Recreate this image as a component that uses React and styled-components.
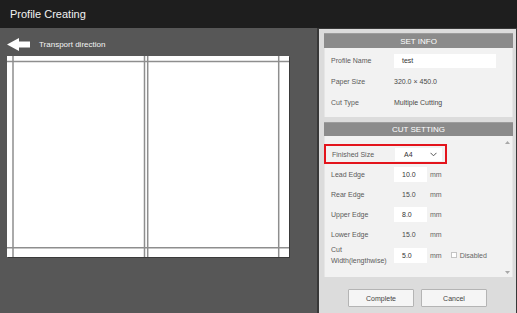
import React from 'react';
import styled, { createGlobalStyle } from 'styled-components';

const GlobalStyle = createGlobalStyle`
  html, body {
    margin: 0;
    padding: 0;
    background: #575757;
  }
  body {
    font-family: "Liberation Sans", Arial, sans-serif;
  }
`;

const Screen = styled.div`
  display: flex;
  flex-direction: column;
  width: 517px;
  height: 313px;
  overflow: hidden;
  background: #575757;
`;

const TitleBar = styled.header`
  display: flex;
  align-items: center;
  flex: none;
  height: 28px;
  padding-left: 10px;
  box-sizing: border-box;
  background: #1e1e1e;
  color: #f2f2f2;
  font-size: 11px;
`;

const Main = styled.div`
  display: flex;
  flex: 1;
  min-height: 0;
`;

const Preview = styled.section`
  display: flex;
  flex-direction: column;
  flex: none;
  width: 317px;
  padding: 10px 0 0 7px;
  box-sizing: border-box;
`;

const Direction = styled.div`
  display: flex;
  align-items: center;
  gap: 9px;
  height: 12px;
  margin-bottom: 6px;
  color: #f4f4f4;
  font-size: 8px;
`;

const Sheet = styled.div`
  width: 282px;
  height: 201px;
  background: #fff;
  box-shadow: 1px 1px 0 #3a3a3a;

  svg {
    display: block;
  }
`;

const Panel = styled.aside`
  display: flex;
  flex-direction: column;
  flex: none;
  width: 200px;
  padding: 4px 3px 0 5px;
  box-sizing: border-box;
  background: #dcdcdc;
  border-top: 1px solid #383838;
  border-left: 2px solid #383838;
  border-right: 1px solid #383838;
`;

const SectionHeader = styled.div`
  display: flex;
  align-items: center;
  justify-content: center;
  height: ${({ $h }) => $h}px;
  box-sizing: border-box;
  margin-top: ${({ $top }) => $top || 0}px;
  background: #8b8b8b;
  border-top: 1px solid #9d9d9d;
  color: #fff;
  font-size: 8px;
`;

const SectionBody = styled.div`
  display: flex;
  height: ${({ $h }) => $h}px;
  box-sizing: border-box;
  background: #f2f2f2;
  border-left: 1px solid #e6e6e6;
  border-right: 1px solid #e6e6e6;
`;

const InfoGrid = styled.div`
  display: grid;
  grid-template-columns: 63px 1fr;
  grid-auto-rows: 21px;
  align-items: center;
  flex: 1;
  padding: 2px 7px 0 6px;
`;

const Label = styled.span`
  flex: none;
  width: ${({ $w }) => $w || 'auto'};
  color: #5a5a5a;
  font-size: 7px;
  line-height: 11px;
`;

const Value = styled.span`
  color: #484848;
  font-size: 7px;
  padding-left: ${({ $pad }) => $pad || 0}px;
  width: ${({ $w }) => ($w ? `${$w}px` : 'auto')};
  box-sizing: border-box;
`;

const TextBox = styled.div`
  display: flex;
  align-items: center;
  width: ${({ $w }) => $w}px;
  height: ${({ $h }) => $h || 15}px;
  padding-left: 8px;
  box-sizing: border-box;
  background: #fff;
  color: #333;
  font-size: 7px;
`;

const Fields = styled.div`
  display: flex;
  flex-direction: column;
  flex: 1;
  padding-top: 8px;
`;

const Row = styled.div`
  display: flex;
  align-items: center;
  height: ${({ $h }) => $h || 20}px;
  box-sizing: border-box;
  margin-left: ${({ $highlight }) => ($highlight ? -1 : 0)}px;
  padding-left: 6px;
  width: ${({ $highlight }) => ($highlight ? '123px' : 'auto')};
  border: ${({ $highlight }) => ($highlight ? '2px solid #e3141c' : 'none')};
`;

const Unit = styled.span`
  margin-left: 3px;
  color: #666;
  font-size: 7px;
`;

const Select = styled(TextBox)`
  justify-content: space-between;
  padding: 0 5px 0 9px;
`;

const Check = styled.label`
  display: flex;
  align-items: center;
  gap: 3px;
  margin-left: 9px;
  color: #666;
  font-size: 7px;

  span {
    width: 6px;
    height: 6px;
    box-sizing: border-box;
    background: #fff;
    border: 1px solid #c4c4c4;
  }
`;

const Scrollbar = styled.div`
  display: flex;
  flex-direction: column;
  justify-content: space-between;
  align-items: center;
  flex: none;
  width: 10px;
  padding: 5px 0 3px;
  box-sizing: border-box;
`;

const Footer = styled.div`
  display: flex;
  justify-content: center;
  gap: 7px;
  padding: 12px 2px 0 0;
`;

const Button = styled.button`
  width: 66px;
  height: 18px;
  padding: 0;
  background: #f5f5f5;
  border: 1px solid #b4b4b4;
  border-radius: 1px;
  color: #444;
  font-family: inherit;
  font-size: 7px;
`;

const Arrow = () => (
  <svg width='23' height='13' viewBox='0 0 23 13'>
    <polygon points='0,6.5 12,0 12,3.5 23,3.5 23,9.5 12,9.5 12,13' fill='#fff' />
  </svg>
);

const Triangle = ({ up }) => (
  <svg width='5' height='3' viewBox='0 0 5 3'>
    <polygon points={up ? '0,3 2.5,0 5,3' : '0,0 2.5,3 5,0'} fill='#a8a8a8' />
  </svg>
);

const Chevron = () => (
  <svg width='7' height='5' viewBox='0 0 7 5'>
    <polyline points='0.5,0.8 3.5,3.8 6.5,0.8' fill='none' stroke='#555' strokeWidth='1' />
  </svg>
);

// cut lines of the sheet, in sheet coordinates
const vLines = [6, 137.5, 140.7, 271.7];
const hLines = [5.5, 191.7];

const CutSheet = () => (
  <Sheet>
    <svg width='282' height='201'>
      {vLines.map((x) => (
        <line key={`v${x}`} x1={x} y1='0' x2={x} y2='201' stroke='#8e8e8e' strokeWidth='1.5' />
      ))}
      {hLines.map((y) => (
        <line key={`h${y}`} x1='0' y1={y} x2='282' y2={y} stroke='#8e8e8e' strokeWidth='1.5' />
      ))}
    </svg>
  </Sheet>
);

const edges = [
  { label: 'Lead Edge', value: '10.0', editable: true },
  { label: 'Rear Edge', value: '15.0' },
  { label: 'Upper Edge', value: '8.0', editable: true },
  { label: 'Lower Edge', value: '15.0' },
];

const App = () => {
  return (
    <Screen>
      <GlobalStyle />
      <TitleBar>Profile Creating</TitleBar>
      <Main>
        <Preview>
          <Direction>
            <Arrow />
            Transport direction
          </Direction>
          <CutSheet />
        </Preview>
        <Panel>
          <SectionHeader $h={15}>SET INFO</SectionHeader>
          <SectionBody $h={69}>
            <InfoGrid>
              <Label>Profile Name</Label>
              <TextBox $w={102} $h={14}>test</TextBox>
              <Label>Paper Size</Label>
              <Value>320.0 × 450.0</Value>
              <Label>Cut Type</Label>
              <Value>Multiple Cutting</Value>
            </InfoGrid>
          </SectionBody>
          <SectionHeader $h={14} $top={5}>CUT SETTING</SectionHeader>
          <SectionBody $h={141}>
            <Fields>
              <Row $highlight>
                <Label $w='63px'>Finished Size</Label>
                <Select $w={47} $h={13}>
                  A4
                  <Chevron />
                </Select>
              </Row>
              {edges.map((e) => (
                <Row key={e.label}>
                  <Label $w='63px'>{e.label}</Label>
                  {e.editable ? (
                    <TextBox $w={33}>{e.value}</TextBox>
                  ) : (
                    <Value $pad={8} $w={33}>{e.value}</Value>
                  )}
                  <Unit>mm</Unit>
                </Row>
              ))}
              <Row $h={22}>
                <Label $w='63px'>
                  Cut
                  <br />
                  Width(lengthwise)
                </Label>
                <TextBox $w={33}>5.0</TextBox>
                <Unit>mm</Unit>
                <Check>
                  <span />
                  Disabled
                </Check>
              </Row>
            </Fields>
            <Scrollbar>
              <Triangle up />
              <Triangle />
            </Scrollbar>
          </SectionBody>
          <Footer>
            <Button>Complete</Button>
            <Button>Cancel</Button>
          </Footer>
        </Panel>
      </Main>
    </Screen>
  );
};

export default App;
